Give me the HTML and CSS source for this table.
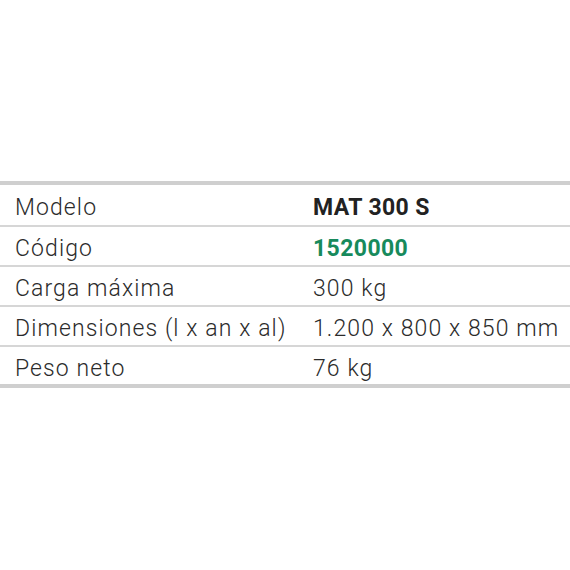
FILE: index.html
```html
<!DOCTYPE html>
<html lang="es">
<head>
<meta charset="utf-8">
<link rel="stylesheet" href="styles.css">
</head>
<body>
<div class="page">
  <table class="specs">
    <tbody>
      <tr><td class="label">Modelo</td><td class="value strong">MAT 300 S</td></tr>
      <tr><td class="label">Código</td><td class="value strong green">1520000</td></tr>
      <tr><td class="label">Carga máxima</td><td class="value">300 kg</td></tr>
      <tr><td class="label">Dimensiones (l x an x al)</td><td class="value">1.200 x 800 x 850 mm</td></tr>
      <tr><td class="label">Peso neto</td><td class="value">76 kg</td></tr>
    </tbody>
  </table>
</div>
</body>
</html>
```
FILE: styles.css
```css
html, body {
  margin: 0;
  padding: 0;
  background: #ffffff;
}
.page {
  padding-top: 181px;
}
.specs {
  width: 100%;
  border-collapse: collapse;
  border-top: 4px solid #cfcfcf;
  border-bottom: 4px solid #cfcfcf;
  font-family: Roboto, "Liberation Sans", sans-serif;
  font-size: 23px;
  letter-spacing: 1.1px;
  color: #2b2b2b;
}
.specs td {
  height: 40px;
  box-sizing: border-box;
  padding: 5px 0 0 0;
  border-top: 2px solid #d6d6d6;
  vertical-align: middle;
  line-height: 1;
}
.specs tr:first-child td {
  border-top: none;
  height: 43px;
}
.label {
  width: 313px;
  padding-left: 15px !important;
  font-weight: 300;
}
.value {
  font-weight: 300;
}
.strong {
  font-weight: 700;
  letter-spacing: 0.4px;
  color: #222222;
}
.green {
  color: #178a5c;
}
```
